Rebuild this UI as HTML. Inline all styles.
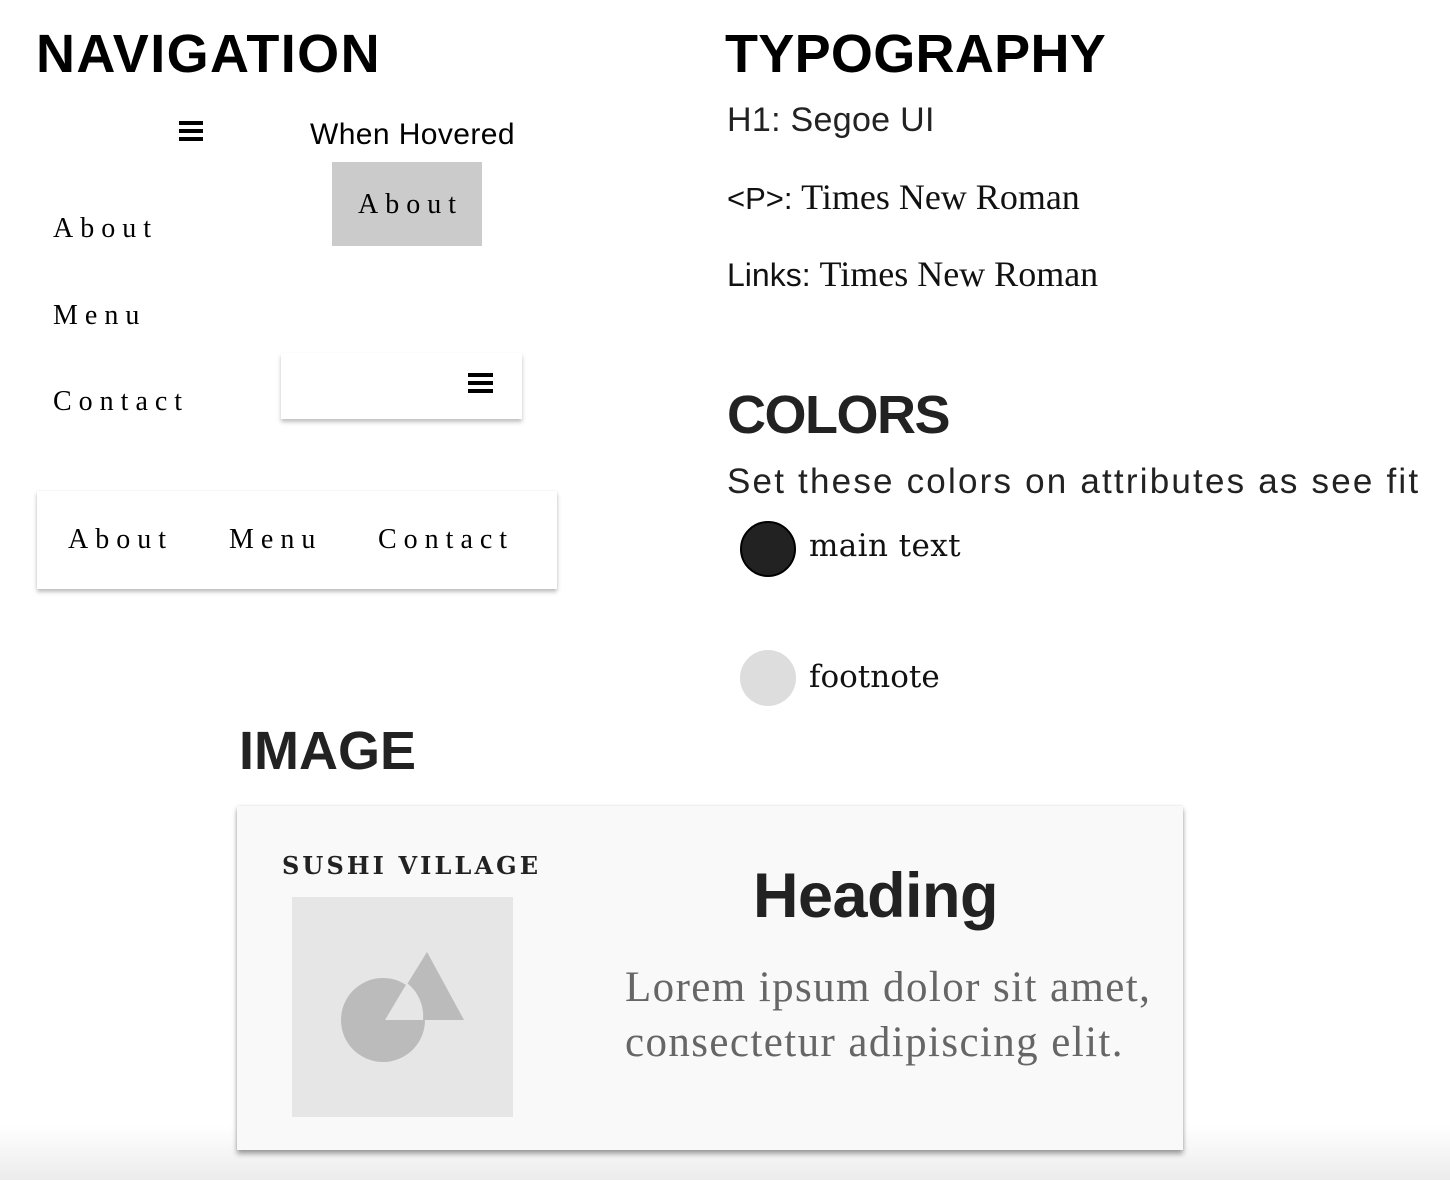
<!DOCTYPE html>
<html><head><meta charset="utf-8"><style>
html,body{margin:0;padding:0;}
body{width:1450px;height:1180px;position:relative;overflow:hidden;background:#fff;font-family:"Liberation Sans",sans-serif;color:#000;}
.a{position:absolute;white-space:nowrap;line-height:1;}
.h{font-weight:bold;font-size:54px;}
.nav{font-family:"Liberation Serif",serif;font-size:28px;letter-spacing:7px;}
.ham{position:absolute;}
.ham i{display:block;height:4px;background:#000;margin-bottom:4px;}
.slab{font-family:"DejaVu Serif","Liberation Serif",serif;}
</style></head><body>
<div style="position:absolute;left:0;top:1125px;width:1450px;height:55px;background:linear-gradient(#fff,#ececec);"></div>

<div class="a h" style="left:36px;top:27px;color:#000;letter-spacing:1.4px;">NAVIGATION</div>
<div class="a h" style="left:725px;top:27px;color:#000;letter-spacing:0.3px;">TYPOGRAPHY</div>
<div class="a h" style="left:727px;top:388px;color:#222;letter-spacing:-1.5px;">COLORS</div>
<div class="a h" style="left:239px;top:724px;color:#222;">IMAGE</div>

<div class="ham" style="left:179px;top:121px;width:24px;"><i></i><i></i><i></i></div>
<div class="a" style="left:310px;top:120px;font-size:30px;letter-spacing:0.4px;">When Hovered</div>
<div style="position:absolute;left:332px;top:162px;width:150px;height:84px;background:#cbcbcb;"></div>
<div class="a nav" style="left:358px;top:191px;">About</div>

<div class="a nav" style="left:53px;top:215px;">About</div>
<div class="a nav" style="left:53px;top:302px;">Menu</div>
<div class="a nav" style="left:53px;top:388px;">Contact</div>

<div style="position:absolute;left:281px;top:353px;width:241px;height:66px;background:#fff;box-shadow:0 3px 4px rgba(0,0,0,.25);"></div>
<div class="ham" style="left:468px;top:373px;width:25px;"><i></i><i></i><i></i></div>

<div style="position:absolute;left:37px;top:491px;width:520px;height:98px;background:#fff;box-shadow:0 3px 4px rgba(0,0,0,.25),0 0 2px rgba(0,0,0,.08);"></div>
<div class="a nav" style="left:68px;top:526px;">About</div>
<div class="a nav" style="left:229px;top:526px;">Menu</div>
<div class="a nav" style="left:378px;top:526px;">Contact</div>

<div class="a" style="left:727px;top:103px;font-size:34px;letter-spacing:0.3px;color:#222;">H1: Segoe UI</div>
<div class="a" style="left:727px;top:179px;font-size:31px;color:#111;">&lt;P&gt;: <span style="font-family:'Liberation Serif',serif;font-size:36px;">Times New Roman</span></div>
<div class="a" style="left:727px;top:256px;font-size:32px;color:#111;">Links: <span style="font-family:'Liberation Serif',serif;font-size:36px;">Times New Roman</span></div>

<div class="a" style="left:727px;top:464px;font-size:35px;letter-spacing:2.2px;color:#222;">Set these colors on attributes as see fit</div>
<div style="position:absolute;left:740px;top:521px;width:52px;height:52px;border-radius:50%;background:#222;border:2px solid #000;"></div>
<div class="a slab" style="left:809px;top:531px;font-size:31px;letter-spacing:0.4px;color:#111;">main text</div>
<div style="position:absolute;left:740px;top:650px;width:56px;height:56px;border-radius:50%;background:#ddd;"></div>
<div class="a slab" style="left:809px;top:662px;font-size:31px;color:#111;">footnote</div>

<div style="position:absolute;left:237px;top:806px;width:946px;height:344px;background:#f9f9f9;box-shadow:0 4px 5px rgba(0,0,0,.35),0 0 3px rgba(0,0,0,.12);"></div>
<div class="a slab" style="left:282px;top:854px;font-size:24px;font-weight:bold;letter-spacing:3.1px;color:#222;">SUSHI VILLAGE</div>
<div style="position:absolute;left:292px;top:897px;width:221px;height:220px;background:#e6e6e6;"></div>
<svg style="position:absolute;left:292px;top:897px;" width="221" height="220">
<circle cx="91" cy="123" r="42" fill="#bbb"/>
<polygon points="135,55 93,123 172,123" fill="#bbb"/>
<path d="M115,86 L93,123 L131,123 A42,42 0 0 0 115,86 Z" fill="#e6e6e6"/>
</svg>
<div class="a" style="left:753px;top:865px;font-size:63px;font-weight:bold;color:#222;letter-spacing:-0.5px;">Heading</div>
<div class="a" style="left:625px;top:960px;font-family:'Liberation Serif',serif;font-size:43px;letter-spacing:1.4px;color:#666;line-height:55px;">Lorem ipsum dolor sit amet,<br>consectetur adipiscing elit.</div>
</body></html>
